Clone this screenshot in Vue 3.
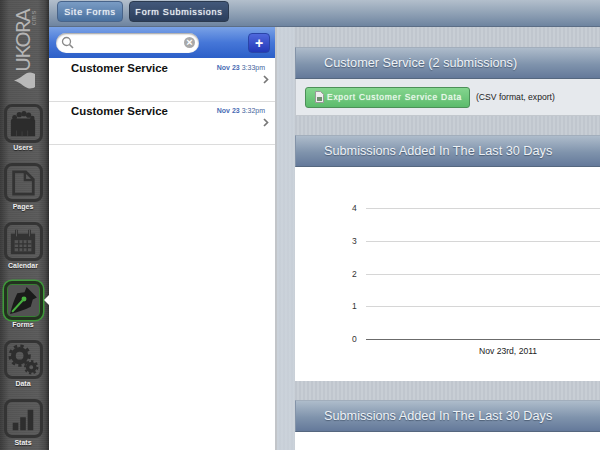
<script setup>
const navItems = [
  { key: 'users', label: 'Users' },
  { key: 'pages', label: 'Pages' },
  { key: 'calendar', label: 'Calendar' },
  { key: 'forms', label: 'Forms', active: true },
  { key: 'data', label: 'Data' },
  { key: 'stats', label: 'Stats' }
]
const rows = [{ time: '3:33pm' }, { time: '3:32pm' }]
const grid = ['4', '3', '2', '1']
</script>

<template>
  <div class="app">
    <aside class="sidebar">
      <div class="logo">
        <div class="logo-words">
          <span class="logo-name">UKORA</span>
          <span class="logo-cms">cms</span>
        </div>
        <svg class="drop" width="21" height="17" viewBox="0 0 21 17"><path d="M0 8.5C6 7 10 2 14 .8a8 8 0 1 1 0 15.4C10 15 6 10 0 8.5z" fill="#b9b9b9"/></svg>
      </div>
      <nav class="nav">
        <div v-for="item in navItems" :key="item.key" class="nav-item" :class="{ active: item.active }">
          <div class="nav-box">
            <svg v-if="item.key === 'users'" viewBox="0 0 30 30" width="28" height="28"><g fill="#2c2c2c"><path d="M2 28V12c0-2 1-3 3-3h20c2 0 3 1 3 3v16z"/><circle cx="6" cy="8" r="2.6"/><circle cx="11" cy="5" r="2.8"/><circle cx="16" cy="4" r="2.8"/><circle cx="21" cy="5.5" r="2.8"/><circle cx="25" cy="8.5" r="2.4"/></g><path d="M8 28v-6M14 28v-5M20 28v-6" stroke="#444" stroke-width=".8"/></svg>
            <svg v-else-if="item.key === 'pages'" viewBox="0 0 30 30" width="28" height="28"><path d="M5 3h13l8 8v16H5z" fill="none" stroke="#333" stroke-width="3"/><path d="M17 3v9h9" fill="none" stroke="#333" stroke-width="2.5"/></svg>
            <svg v-else-if="item.key === 'calendar'" viewBox="0 0 30 30" width="28" height="28"><path d="M2 6h26v22H2z" fill="#333"/><path d="M8 2v7M22 2v7" stroke="#333" stroke-width="3"/><path d="M8 2v7M22 2v7" stroke="#5a5a5a" stroke-width="1"/><path d="M6 13h18v12H6z" fill="#555"/><path d="M6 17h18M6 21h18M10.5 13v12M15 13v12M19.5 13v12" stroke="#333" stroke-width="1.4"/></svg>
            <svg v-else-if="item.key === 'forms'" viewBox="0 0 30 30" width="31" height="31"><path d="M18 2l10 10-4 2-2 7c-6 3-12 5-20 7 2-8 4-14 7-20l7-1z" fill="#1a1a1a"/><path d="M4 26L14 15" stroke="#49b040" stroke-width="2"/><circle cx="15.5" cy="13.5" r="2.4" fill="#49b040"/></svg>
            <svg v-else-if="item.key === 'data'" viewBox="0 0 32 32" width="31" height="31"><g fill="none" stroke="#2e2e2e"><circle cx="12" cy="12" r="6.5" stroke-width="5"/><circle cx="12" cy="12" r="10" stroke-width="3" stroke-dasharray="3.4 3.4"/><circle cx="24" cy="24" r="3.8" stroke-width="3.5"/><circle cx="24" cy="24" r="6.3" stroke-width="2.2" stroke-dasharray="2.4 2.4"/></g></svg>
            <svg v-else viewBox="0 0 30 30" width="28" height="28"><path d="M4 19h6v8H4zM12 13h6v14h-6zM20 5h6v22h-6z" fill="#2e2e2e"/></svg>
          </div>
          <span class="nav-label">{{ item.label }}</span>
          <span v-if="item.active" class="pointer"></span>
        </div>
      </nav>
    </aside>

    <div class="main">
      <header class="topbar">
        <button class="tab tab-light">Site Forms</button>
        <button class="tab tab-dark">Form Submissions</button>
      </header>

      <div class="columns">
        <section class="list">
          <div class="list-head">
            <div class="search">
              <svg width="13" height="13" viewBox="0 0 13 13"><circle cx="5.5" cy="5.5" r="4" fill="none" stroke="#8a8a8a" stroke-width="1.3"/><path d="M8.5 8.5l3.5 3.5" stroke="#8a8a8a" stroke-width="1.6"/></svg>
              <span class="clear">×</span>
            </div>
            <button class="add">+</button>
          </div>
          <div v-for="row in rows" :key="row.time" class="row">
            <div class="row-title">Customer Service</div>
            <div class="row-meta">
              <div class="row-date"><b>Nov 23</b> {{ row.time }}</div>
              <svg class="chev" width="6" height="9" viewBox="0 0 6 9"><path d="M1 1l3.5 3.5L1 8" fill="none" stroke="#777" stroke-width="1.7"/></svg>
            </div>
          </div>
        </section>

        <section class="content">
          <div class="panel">
            <h2 class="panel-head">Customer Service (2 submissions)</h2>
            <div class="export-body">
              <button class="export">
                <svg width="9" height="12" viewBox="0 0 9 12"><path d="M.5.5h5l3 3v8H.5z" fill="#eee" stroke="#999"/><rect x="2" y="6" width="5" height="4" fill="#6f8f6f"/></svg>
                Export Customer Service Data
              </button>
              <span class="note">(CSV format, export)</span>
            </div>
          </div>

          <div class="panel">
            <h2 class="panel-head">Submissions Added In The Last 30 Days</h2>
            <div class="chart">
              <div v-for="g in grid" :key="g" class="line"><span>{{ g }}</span><i></i></div>
              <div class="line zero"><span>0</span><i></i></div>
              <div class="x-label">Nov 23rd, 2011</div>
            </div>
          </div>

          <div class="panel">
            <h2 class="panel-head">Submissions Added In The Last 30 Days</h2>
            <div class="chart-empty"></div>
          </div>
        </section>
      </div>
    </div>
  </div>
</template>

<style scoped>
.app {
  width: 600px;
  height: 450px;
  display: flex;
  overflow: hidden;
  font-family: "Liberation Sans", Arial, sans-serif;
  background: #fff;
}
.sidebar {
  width: 49px;
  flex: none;
  display: flex;
  flex-direction: column;
  background:
    repeating-linear-gradient(0deg, rgba(255,255,255,.025) 0 1px, rgba(0,0,0,.025) 1px 2px),
    linear-gradient(90deg, #3a3a3a 0, #555 9px, #5a5a5a 38px, #484848 45px, #2d2d2d 49px);
}
.logo {
  height: 104px;
  flex: none;
  padding: 10px 0 0 14px;
  box-sizing: border-box;
  display: flex;
  flex-direction: column;
  align-items: flex-start;
}
.logo-words {
  display: flex;
  height: 62px;
  align-items: flex-start;
}
.logo-name,
.logo-cms {
  writing-mode: vertical-rl;
  transform: rotate(180deg);
  white-space: nowrap;
}
.logo-name {
  font-family: Lato, "Liberation Sans", sans-serif;
  font-size: 20px;
  line-height: 17px;
  letter-spacing: -1.5px;
  color: #b5b5b5;
}
.logo-cms {
  font-size: 7px;
  line-height: 5px;
  letter-spacing: .8px;
  color: #a0a0a0;
}
.nav { display: flex; flex-direction: column; }
.nav-item {
  position: relative;
  height: 59px;
  display: flex;
  flex-direction: column;
  align-items: center;
  padding-right: 3px;
}
.nav-box {
  width: 39px;
  height: 39px;
  box-sizing: border-box;
  border: 3px solid #343434;
  border-radius: 8px;
  display: flex;
  align-items: center;
  justify-content: center;
}
.active .nav-box {
  border-color: #23321f;
  background: #525252;
  box-shadow: 0 0 0 1.5px #3f9a3a, inset 0 0 0 1px #357f31;
}
.nav-label {
  font-size: 7px;
  font-weight: 700;
  line-height: 9px;
  color: #eee;
  text-shadow: 0 1px 1px #222;
}
.pointer {
  position: absolute;
  right: 0;
  top: 14px;
  width: 0;
  height: 0;
  border-top: 5px solid transparent;
  border-bottom: 5px solid transparent;
  border-right: 5px solid #fff;
}
.main {
  flex: 1;
  min-width: 0;
  display: flex;
  flex-direction: column;
}
.topbar {
  height: 27px;
  flex: none;
  box-sizing: border-box;
  display: flex;
  align-items: flex-start;
  gap: 6px;
  padding: 1px 0 0 8px;
  background: linear-gradient(#b3bfcc, #94a5b8 45%, #6e84a0);
  border-bottom: 1px solid #5c6e86;
}
.tab {
  height: 21px;
  padding: 0;
  border-radius: 4px;
  font: 400 9px "Liberation Sans", Arial, sans-serif;
  letter-spacing: .8px;
  color: #eef2f6;
  text-shadow: 0 0 1px #dfe6ee;
}
.tab-light {
  width: 66px;
  border: 1px solid #48648a;
  background: linear-gradient(#7a9cc4, #48709f);
}
.tab-dark {
  width: 100px;
  border: 1px solid #2b3a50;
  background: linear-gradient(#42587a, #2b3e5c);
}
.columns { flex: 1; display: flex; min-height: 0; }
.list {
  width: 228px;
  flex: none;
  background: #fff;
  border-right: 2px solid #c2c5c9;
  box-sizing: border-box;
}
.list-head {
  height: 31px;
  margin-bottom: 1px;
  display: flex;
  align-items: center;
  justify-content: space-between;
  padding: 0 5px 0 7px;
  background: linear-gradient(#7aa2e6, #4677d8 50%, #2c5fc8);
}
.search {
  width: 143px;
  height: 20px;
  box-sizing: border-box;
  border-radius: 10px;
  background: #fff;
  box-shadow: inset 0 1px 2px #999;
  display: flex;
  align-items: center;
  justify-content: space-between;
  padding: 0 4px 0 5px;
}
.clear {
  width: 11px;
  height: 11px;
  border-radius: 50%;
  background: #a9a9a9;
  color: #fff;
  font-size: 11px;
  font-weight: 700;
  line-height: 11px;
  text-align: center;
}
.add {
  width: 22px;
  height: 20px;
  padding: 0;
  border: 1px solid #2a45a8;
  border-radius: 4px;
  background: linear-gradient(#4f68dc, #2338b8);
  color: #fff;
  font: 700 14px/16px "Liberation Sans", Arial, sans-serif;
}
.row {
  height: 43px;
  box-sizing: border-box;
  border-bottom: 1px solid #dcdcdc;
  display: flex;
  justify-content: space-between;
  padding: 2px 10px 0 22px;
}
.row-title {
  font-size: 11.4px;
  font-weight: 700;
  line-height: 15px;
  color: #111;
}
.row-meta {
  display: flex;
  flex-direction: column;
  align-items: flex-end;
}
.row-date {
  font-size: 7px;
  line-height: 9px;
  color: #44639c;
  margin-top: 2px;
}
.row-date b { color: #4a6cb4; }
.chev { margin: 3px -4px 0 0; }
.content {
  flex: 1;
  min-width: 0;
  overflow: hidden;
  padding: 20px 0 0 18px;
  display: flex;
  flex-direction: column;
  gap: 19px;
  background:
    linear-gradient(90deg, rgba(205,213,222,.6) 0 17px, transparent 18px),
    repeating-linear-gradient(90deg, #c8ced5 0 2px, #c0c6ce 2px 4px);
}
.panel { flex: none; }
.panel-head {
  height: 32px;
  box-sizing: border-box;
  margin: 0;
  padding-left: 28px;
  border-top: 1px solid #a2aebc;
  border-left: 1px solid #8393a8;
  border-bottom: 1px solid #55677f;
  background: linear-gradient(#aebccb, #7f93ac 55%, #64799a);
  color: #eef2f6;
  font-size: 12.7px;
  font-weight: 400;
  line-height: 31px;
  text-shadow: 0 1px 1px #4c5d74;
}
.export-body {
  height: 37px;
  box-sizing: border-box;
  display: flex;
  align-items: center;
  gap: 6px;
  padding-left: 9px;
  background: #e6e9ed;
  border-bottom: 1px solid #c3c8ce;
  border-left: 1px solid #c3c8ce;
}
.export {
  width: 165px;
  height: 21px;
  padding: 0 0 0 9px;
  display: flex;
  align-items: center;
  gap: 3px;
  border: 1px solid #4c9058;
  border-radius: 3px;
  background: linear-gradient(#84d58e, #5cbb6c);
  color: #edf9ee;
  font: 400 8.5px "Liberation Sans", Arial, sans-serif;
  letter-spacing: .72px;
  white-space: nowrap;
  text-shadow: 0 0 1px #e4f5e6;
}
.note {
  font-size: 8.6px;
  color: #222;
}
.chart {
  height: 214px;
  background: #fff;
  padding-top: 36px;
  box-sizing: border-box;
  display: flex;
  flex-direction: column;
}
.line {
  height: 32.75px;
  flex: none;
  display: flex;
  align-items: flex-start;
  padding-left: 57px;
}
.line span {
  width: 8px;
  font-size: 8.5px;
  line-height: 10px;
  color: #333;
}
.line i {
  flex: 1;
  margin: 5px 0 0 6px;
  height: 1px;
  background: #d6d6d6;
}
.zero { height: 11px; }
.zero i { background: #6b6b6b; }
.x-label {
  margin: 0 0 0 184px;
  font-size: 8.6px;
  line-height: 12px;
  color: #222;
}
.chart-empty { height: 60px; background: #fff; }
</style>

<style>
html, body { margin: 0; background: #fff; }
</style>
